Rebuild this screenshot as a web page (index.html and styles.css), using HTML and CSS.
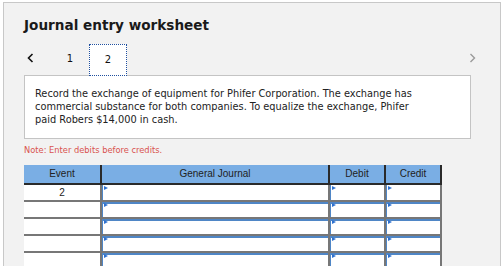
FILE: index.html
```html
<!DOCTYPE html>
<html>
<head>
  <title>Journal entry worksheet</title>
  <link rel="stylesheet" href="styles.css">
</head>
<body>
  <div class="panel">
    <h1>Journal entry worksheet</h1>

    <div class="tabs">
      <button class="nav prev" aria-label="Previous">
        <svg width="7" height="10" viewBox="0 0 7 10"><polyline points="5.5,1 1.5,5 5.5,9" fill="none" stroke="#111" stroke-width="1.6"/></svg>
      </button>
      <div class="tab">1</div>
      <div class="tab active">2</div>
      <button class="nav next" aria-label="Next">
        <svg width="7" height="10" viewBox="0 0 7 10"><polyline points="1.5,1 5.5,5 1.5,9" fill="none" stroke="#9a9a9a" stroke-width="1.4"/></svg>
      </button>
    </div>

    <div class="question">
      <p>Record the exchange of equipment for Phifer Corporation. The exchange has commercial substance for both companies. To equalize the exchange, Phifer paid Robers $14,000 in cash.</p>
    </div>

    <div class="note">Note: Enter debits before credits.</div>

    <div class="journal">
      <div class="row head">
        <div class="cell">Event</div>
        <div class="cell">General Journal</div>
        <div class="cell">Debit</div>
        <div class="cell">Credit</div>
      </div>
      <div class="row">
        <div class="cell event">2</div>
        <div class="cell"><div class="field"></div></div>
        <div class="cell"><div class="field"></div></div>
        <div class="cell"><div class="field"></div></div>
      </div>
      <div class="row">
        <div class="cell event"></div>
        <div class="cell"><div class="field"></div></div>
        <div class="cell"><div class="field"></div></div>
        <div class="cell"><div class="field"></div></div>
      </div>
      <div class="row">
        <div class="cell event"></div>
        <div class="cell"><div class="field"></div></div>
        <div class="cell"><div class="field"></div></div>
        <div class="cell"><div class="field"></div></div>
      </div>
      <div class="row">
        <div class="cell event"></div>
        <div class="cell"><div class="field"></div></div>
        <div class="cell"><div class="field"></div></div>
        <div class="cell"><div class="field"></div></div>
      </div>
      <div class="row">
        <div class="cell event"></div>
        <div class="cell"><div class="field"></div></div>
        <div class="cell"><div class="field"></div></div>
        <div class="cell"><div class="field"></div></div>
      </div>
    </div>
  </div>
</body>
</html>
```

FILE: styles.css
```css
html, body {
  margin: 0;
  padding: 0;
  background: #ffffff;
  overflow: hidden;
  height: 266px;
}

body {
  font-family: 'DejaVu Sans', Verdana, sans-serif;
  color: #222;
}

.panel {
  box-sizing: border-box;
  width: 498px;
  height: 264px;
  overflow: hidden;
  margin: 2px 0 0 3px;
  padding: 13px 20px 0 20px;
  background: #f2f2f2;
  border: 1px solid #c8c8c8;
  border-bottom: none;
}

h1 {
  margin: 0;
  font-size: 13.6px;
  line-height: 18px;
  font-weight: bold;
  color: #1a1a1a;
}

/* Tabs */
.tabs {
  display: flex;
  align-items: stretch;
  height: 31px;
  margin-top: 10px;
}

.nav {
  display: flex;
  align-items: center;
  background: none;
  border: none;
  padding: 0 0 0 3px;
  margin: 0;
  cursor: pointer;
}

.nav.prev {
  width: 27px;
  padding-bottom: 4px;
}

.nav.next {
  margin-left: auto;
  margin-right: 4px;
  padding-bottom: 4px;
}

.tab {
  box-sizing: border-box;
  width: 38px;
  height: 31px;
  display: flex;
  align-items: center;
  justify-content: center;
  padding-bottom: 2px;
  font-size: 10px;
  color: #111;
}

.tab.active {
  height: 32px;
  background: #ffffff;
  border: 1px dotted #1f4f9f;
}

/* Question text */
.question {
  box-sizing: border-box;
  width: 447px;
  padding: 11px 44px 12px 10px;
  background: #ffffff;
  border: 1px solid #c4c4c4;
}

.question p {
  margin: 0;
  font-size: 9.8px;
  line-height: 13px;
  color: #222;
}

.note {
  margin-top: 5px;
  font-size: 8.3px;
  line-height: 12px;
  color: #d9534f;
}

/* Journal grid */
.journal {
  margin-top: 9px;
  width: 418px;
  font-family: 'Liberation Sans', Arial, sans-serif;
  font-size: 10px;
}

.row {
  display: grid;
  grid-template-columns: 76px 228px 56px 58px;
}

.cell {
  box-sizing: border-box;
  height: 17px;
  background: #ffffff;
  border-left: 2px solid #777;
  border-bottom: 2px solid #777;
}

.cell:first-child {
  border-left: none;
}

.cell:last-child {
  border-right: 2px solid #777;
}

.head .cell {
  height: 20px;
  line-height: 18px;
  text-align: center;
  color: #222;
  background: #7aaee4;
  border-color: #2a2a2a;
}

.cell.event {
  text-align: center;
  line-height: 15px;
  color: #222;
}

.field {
  position: relative;
  box-sizing: border-box;
  height: 15px;
  border-left: 1px solid #4f86c6;
}

.row + .row + .row .field {
  border-top: 2px solid #4f86c6;
}

.field::before {
  content: "";
  position: absolute;
  left: 1px;
  top: 1px;
  border-left: 4px solid #2f72d0;
  border-top: 2px solid transparent;
  border-bottom: 2px solid transparent;
}

.row + .row + .row .field::before {
  top: -1px;
}
```
